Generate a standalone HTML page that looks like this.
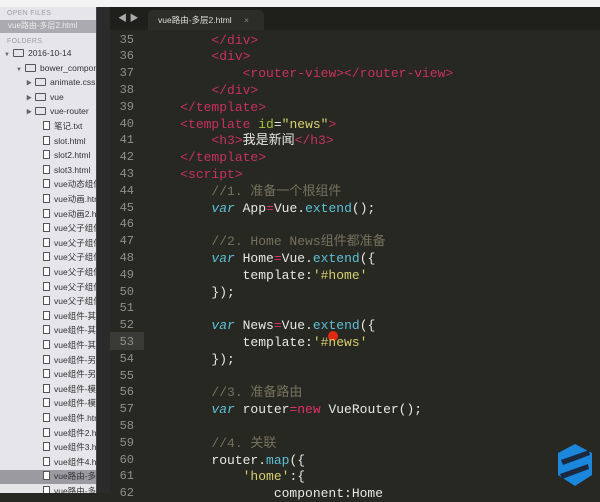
<!DOCTYPE html>
<html><head><meta charset="utf-8"><style>
*{margin:0;padding:0;box-sizing:border-box}
body{width:600px;height:493px;overflow:hidden;background:#272822;position:relative;font-family:"Liberation Sans","Noto Sans CJK SC",sans-serif}
#top{position:absolute;left:0;top:0;width:600px;height:7px;background:#f4f4f4}
#side{position:absolute;left:0;top:7px;width:96px;height:486px;background:#e6e6ea;overflow:hidden}
#strip{position:absolute;left:96px;top:7px;width:14px;height:486px;background:#2b2b2b;border-left:1px solid #444}
.hdr{position:absolute;left:7px;font-size:7px;color:#9a9aa5;letter-spacing:.3px}
.it{position:absolute;font-size:8.5px;color:#333;white-space:nowrap;height:14px;line-height:14px}
.fi{display:inline-block;width:7px;height:9px;border:1px solid #555;margin-right:4px;vertical-align:-1px;background:#fff}
.fo{display:inline-block;width:11px;height:8px;border:1px solid #555;margin-right:4px;vertical-align:-1px;border-radius:1px}
.ar{display:inline-block;font-size:6px;color:#666;width:9px}
#tabs{position:absolute;left:110px;top:7px;width:490px;height:23px;background:#1f1f1c}
#tab{position:absolute;left:148px;top:10px;width:116px;height:20px;background:#2c2d28;border-radius:5px 5px 0 0;color:#ddd;font-size:8.5px;line-height:20px;padding-left:10px}
.ln{position:absolute;left:110px;width:24px;text-align:right;font:12px "Liberation Mono",monospace;color:#8f908a}
.cl{position:absolute;left:149px;font:13px "Liberation Mono","Noto Sans CJK SC",monospace;color:#e8e8e0;white-space:pre;height:17px;line-height:17px}
.t{color:#c8325a}.a{color:#a6c23a}.s{color:#d8cf70}.k{color:#5cc0d8;font-style:italic}.f{color:#5cc0d8}.c{color:#75715e}.p{color:#e0306a}
</style></head><body>
<div id="top"></div>
<div id="side">
<div class="hdr" style="top:3px">OPEN FILES</div>
<div style="position:absolute;left:0;top:13px;width:96px;height:13px;background:#aaaab0"></div>
<div class="it" style="left:8px;top:12px;color:#eee;font-size:8px">vue路由-多层2.html</div>
<div class="hdr" style="top:31px">FOLDERS</div>
</div>
<div id="strip"></div>
<div id="tabs"><span style="position:absolute;left:8px;top:4px;color:#aaa;font-size:9px">◀ ▶</span></div>
<div id="tab">vue路由-多层2.html <span style="color:#888;margin-left:10px">×</span></div>
<div style="position:absolute;left:110px;top:332px;width:34px;height:18px;background:#3a3a36"></div>
<div style="position:absolute;left:328px;top:331px;width:10px;height:10px;border-radius:50%;background:#e02a10"></div>
<svg style="position:absolute;left:555px;top:442px" width="40" height="46" viewBox="0 0 40 46"><path d="M20 2 L37 11 L37 33 L20 44 L3 33 L3 11Z" fill="#1a86dc"/><path d="M6 18 L34 8 L35 13 L8 23Z" fill="#1b2a40"/><path d="M5 32 L33 22 L34 27 L7 37Z" fill="#1b2a40"/></svg>
<div id="code"></div>
<script>
var side=[
[0,0,'▼','fo','2016-10-14'],[1,0,'▼','fo','bower_components'],[2,0,'▶','fo','animate.css'],[2,0,'▶','fo','vue'],[2,0,'▶','fo','vue-router'],
[2,1,'','fi','笔记.txt'],[2,1,'','fi','slot.html'],[2,1,'','fi','slot2.html'],[2,1,'','fi','slot3.html'],[2,1,'','fi','vue动态组件'],[2,1,'','fi','vue动画.html'],[2,1,'','fi','vue动画2.html'],
[2,1,'','fi','vue父子组件'],[2,1,'','fi','vue父子组件'],[2,1,'','fi','vue父子组件'],[2,1,'','fi','vue父子组件'],[2,1,'','fi','vue父子组件'],[2,1,'','fi','vue父子组件'],
[2,1,'','fi','vue组件-其他'],[2,1,'','fi','vue组件-其他'],[2,1,'','fi','vue组件-其他'],[2,1,'','fi','vue组件-另一'],[2,1,'','fi','vue组件-另一'],[2,1,'','fi','vue组件-模板'],[2,1,'','fi','vue组件-模板'],
[2,1,'','fi','vue组件.html'],[2,1,'','fi','vue组件2.html'],[2,1,'','fi','vue组件3.html'],[2,1,'','fi','vue组件4.html'],[2,1,'','fi','vue路由-多层'],[2,1,'','fi','vue路由-多层2']];
var sd=document.getElementById('side'),h='';
side.forEach(function(s,i){var y=39+i*14.6;
if(i==29)h+='<div style="position:absolute;left:0;top:'+(y+1)+'px;width:96px;height:14px;background:#9a9aa0"></div>';
var x=[4,16,26][s[0]]+(s[1]?8:0);
h+='<div class="it" style="left:'+(s[2]?x:x+9)+'px;top:'+y+'px">'+(s[2]?'<span class="ar">'+s[2]+'</span>':'')+'<span class="'+s[3]+'"></span>'+s[4]+'</div>';});
sd.innerHTML+=h;
var L=[
'        <span class="t">&lt;/div&gt;</span>',
'        <span class="t">&lt;div&gt;</span>',
'            <span class="t">&lt;router-view&gt;&lt;/router-view&gt;</span>',
'        <span class="t">&lt;/div&gt;</span>',
'    <span class="t">&lt;/template&gt;</span>',
'    <span class="t">&lt;template</span> <span class="a">id</span>=<span class="s">"news"</span><span class="t">&gt;</span>',
'        <span class="t">&lt;h3&gt;</span>我是新闻<span class="t">&lt;/h3&gt;</span>',
'    <span class="t">&lt;/template&gt;</span>',
'    <span class="t">&lt;script&gt;</span>',
'        <span class="c">//1. 准备一个根组件</span>',
'        <span class="k">var</span> App<span class="p">=</span>Vue.<span class="f">extend</span>();',
'',
'        <span class="c">//2. Home News组件都准备</span>',
'        <span class="k">var</span> Home<span class="p">=</span>Vue.<span class="f">extend</span>({',
'            template:<span class="s">\'#home\'</span>',
'        });',
'',
'        <span class="k">var</span> News<span class="p">=</span>Vue.<span class="f">extend</span>({',
'            template:<span class="s">\'#news\'</span>',
'        });',
'',
'        <span class="c">//3. 准备路由</span>',
'        <span class="k">var</span> router<span class="p">=new</span> VueRouter();',
'',
'        <span class="c">//4. 关联</span>',
'        router.<span class="f">map</span>({',
'            <span class="s">\'home\'</span>:{',
'                component:Home'];
var c='';
L.forEach(function(l,i){var y=31.6+i*16.8;
c+='<div class="ln" style="top:'+(y+1)+'px">'+(35+i)+'</div><div class="cl" style="top:'+y+'px">'+l+'</div>';});
document.getElementById('code').innerHTML=c;
</script>
</body></html>
